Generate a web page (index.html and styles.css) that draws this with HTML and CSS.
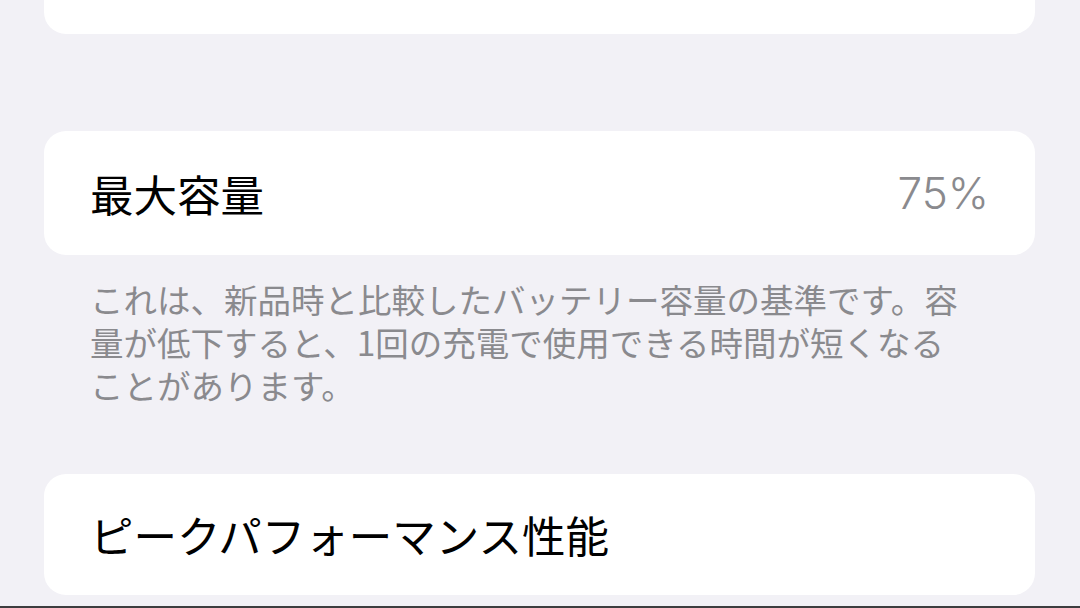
FILE: index.html
```html
<!DOCTYPE html>
<html lang="ja">
<head>
    <meta charset="UTF-8">
    <meta name="viewport" content="width=device-width, initial-scale=1.0">
    <title>バッテリーの状態</title>
    <link rel="stylesheet" href="styles.css">
</head>
<body>

    <div class="settings">
        <div class="group group-top"></div>

        <div class="group">
            <div class="row">
                <span class="row-title">最大容量</span>
                <span class="row-value">75%</span>
            </div>
        </div>
        <p class="footnote">これは、新品時と比較したバッテリー容量の基準です。容量が低下すると、1回の充電で使用できる時間が短くなることがあります。</p>

        <div class="group group-last">
            <div class="row">
                <span class="row-title">ピークパフォーマンス性能</span>
            </div>
        </div>
    </div>

    <div class="bottom-edge"></div>

</body>
</html>
```

FILE: styles.css
```css
* {
    box-sizing: border-box;
    margin: 0;
    padding: 0;
}
body {
    font-family: "Inter", "Noto Sans CJK JP", sans-serif;
    background-color: #f2f1f6;
    width: 1080px;
    height: 608px;
    overflow: hidden;
}
.settings {
    padding: 0 45px 0 44px;
}
.group {
    background-color: #fff;
    border-radius: 22px;
}
.group-top {
    height: 34px;
    border-radius: 0 0 22px 22px;
    margin-bottom: 97px;
}
.row {
    display: flex;
    justify-content: space-between;
    align-items: center;
    height: 124px;
    padding: 0 46px 0 46px;
}
.group-last {
    margin-top: 68px;
}
.group-last .row {
    height: 121px;
}
.row-title {
    font-family: "Noto Sans CJK JP", sans-serif;
    font-size: 43.5px;
    color: #000;
}
.row-value {
    font-family: "Inter", sans-serif;
    font-size: 44px;
    font-weight: 300;
    color: #8a8a8e;
}
.footnote {
    font-family: "Noto Sans CJK JP", sans-serif;
    font-size: 33.5px;
    line-height: 43px;
    color: #8a8a8e;
    width: 926px;
    padding: 0 0 0 46px;
    margin-top: 22px;
}
.bottom-edge {
    height: 2px;
    margin-top: 11px;
    background-color: #3d3d3f;
}
```
